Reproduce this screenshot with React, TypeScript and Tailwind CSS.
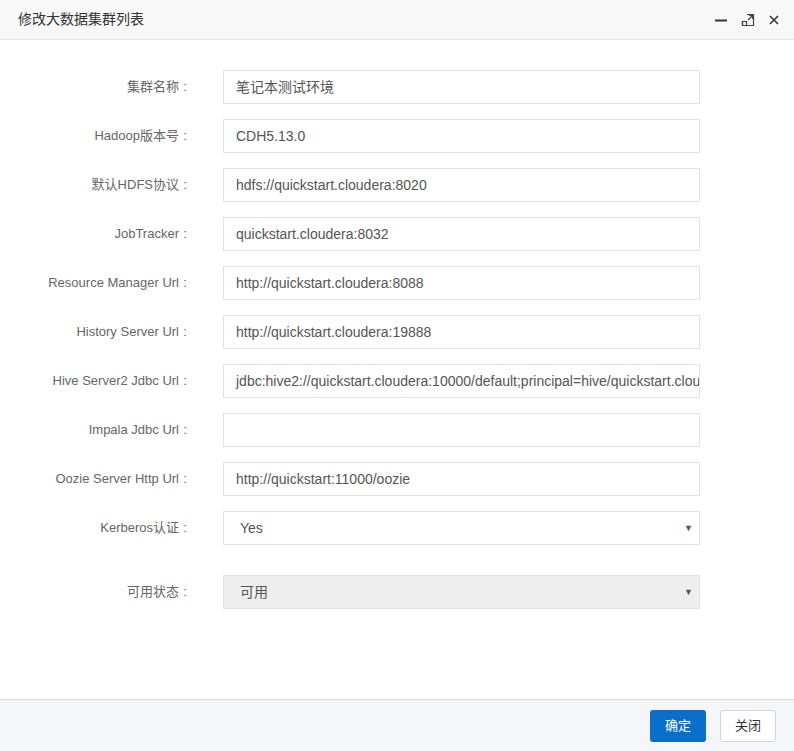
import React from 'react';

const fields: { label: string; value: string; kind?: 'select' | 'disabled' }[] = [
  { label: '集群名称', value: '笔记本测试环境' },
  { label: 'Hadoop版本号', value: 'CDH5.13.0' },
  { label: '默认HDFS协议', value: 'hdfs://quickstart.cloudera:8020' },
  { label: 'JobTracker', value: 'quickstart.cloudera:8032' },
  { label: 'Resource Manager Url', value: 'http://quickstart.cloudera:8088' },
  { label: 'History Server Url', value: 'http://quickstart.cloudera:19888' },
  { label: 'Hive Server2 Jdbc Url', value: 'jdbc:hive2://quickstart.cloudera:10000/default;principal=hive/quickstart.cloudera@CLOUDERA' },
  { label: 'Impala Jdbc Url', value: '' },
  { label: 'Oozie Server Http Url', value: 'http://quickstart:11000/oozie' },
  { label: 'Kerberos认证', value: 'Yes', kind: 'select' },
];

const Caret = () => (
  <span className="absolute right-[6px] top-1/2 -translate-y-1/2 text-[9px] leading-none text-[#555]">▼</span>
);

const Row = ({ label, value, kind }: { label: string; value: string; kind?: 'select' | 'disabled' }) => (
  <div className="flex items-center">
    <div className="flex w-[191px] justify-end text-[13px] text-[#666]">
      <span>{label}</span>
      <span className="w-[12px] text-center">:</span>
    </div>
    <div
      className={`relative ml-[32px] flex h-[34px] w-[477px] items-center overflow-hidden whitespace-nowrap border border-[#e3e3e3] text-[14px] text-[#555] ${
        kind === 'disabled' ? 'bg-[#eeeeee] pl-[16px]' : kind === 'select' ? 'bg-white pl-[16px]' : 'bg-white pl-[12px]'
      }`}
    >
      <span className="pr-[1px]">{value}</span>
      {kind && <Caret />}
    </div>
  </div>
);

export default function App() {
  return (
    <div
      className="flex h-screen w-full flex-col bg-white"
      style={{ fontFamily: '"Liberation Sans", Arial, "Noto Sans CJK SC", sans-serif' }}
    >
      {/* title bar */}
      <div className="flex h-[40px] shrink-0 items-center justify-between border-b border-[#e5e5e5] bg-[#f8f8f8] pl-[18px] pr-[14px]">
        <span className="text-[14px] text-[#333]">修改大数据集群列表</span>
        <div className="flex items-center gap-[13px] text-[#333]">
          <svg width="14" height="14" viewBox="0 0 14 14">
            <path d="M1 7.5h12" stroke="#333" strokeWidth="2" />
          </svg>
          <svg width="14" height="14" viewBox="0 0 14 14" fill="none" stroke="#444" strokeWidth="1.2">
            <path d="M6 1.5h6.5v11h-11V8" />
            <path d="M1.5 8.5h4v4h-4z" />
            <path d="M7 7l4.5-4.5M8 2.5h3.5V6" />
          </svg>
          <svg width="12" height="12" viewBox="0 0 12 12" stroke="#333" strokeWidth="1.6">
            <path d="M2 2l8 8M10 2l-8 8" />
          </svg>
        </div>
      </div>

      {/* form */}
      <div className="flex-1 pt-[30px]">
        <div className="flex flex-col gap-[15px]">
          {fields.map((f) => (
            <Row key={f.label} {...f} />
          ))}
        </div>
        <div className="mt-[30px]">
          <Row label="可用状态" value="可用" kind="disabled" />
        </div>
      </div>

      {/* footer */}
      <div className="flex h-[52px] shrink-0 items-center justify-end gap-[14px] border-t border-[#dcdcdc] bg-[#f4f6f9] pr-[18px]">
        <button className="h-[32px] w-[56px] rounded-[3px] bg-[#0a6fc8] text-[13px] text-white">确定</button>
        <button className="h-[32px] w-[56px] rounded-[3px] border border-[#d5d5d5] bg-white text-[13px] text-[#333]">关闭</button>
      </div>
    </div>
  );
}
